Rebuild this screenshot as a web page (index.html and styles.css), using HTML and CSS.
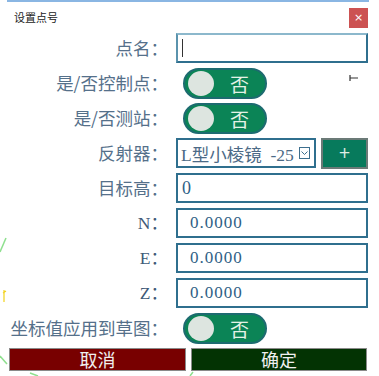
FILE: index.html
```html
<!DOCTYPE html>
<html lang="zh-CN">
<head>
  <meta charset="UTF-8" />
  <meta name="viewport" content="width=device-width, initial-scale=1.0"/>
  <title>设置点号</title>
  <link rel="stylesheet" href="styles.css">
</head>
<body>
  <!-- sketch canvas behind the dialog -->
  <svg class="sketch" width="379" height="376" viewBox="0 0 379 376">
    <path d="M0 252 L6 238" stroke="#8fe08f" stroke-width="1.5" fill="none"/>
    <path d="M4 290 L4 302 M3 293 L6 291" stroke="#f2d21a" stroke-width="1.2" fill="none"/>
    <path d="M0 356 L7 364" stroke="#8fe08f" stroke-width="1.5" fill="none"/>
    <path d="M30 373 L38 376 M190 376 L193 372" stroke="#8fe08f" stroke-width="1.5" fill="none"/>
    <path d="M350 78 L358 78 M350 75 L350 81" stroke="#333" stroke-width="1.2" fill="none"/>
  </svg>

  <div class="dialog">
    <div class="dialog-head">
      <span class="dialog-title">设置点号</span>
      <button class="close-btn">×</button>
    </div>

    <div class="form">
      <label class="lbl">点名：</label>
      <div class="field text-field focused"><span class="caret"></span></div>

      <label class="lbl">是/否控制点：</label>
      <div class="field"><div class="toggle"><span class="knob"></span><span class="toggle-text">否</span></div></div>

      <label class="lbl">是/否测站：</label>
      <div class="field"><div class="toggle"><span class="knob"></span><span class="toggle-text">否</span></div></div>

      <label class="lbl">反射器：</label>
      <div class="field select-row">
        <div class="text-field select">
          <span class="select-value">L型小棱镜&nbsp;&nbsp;-25</span>
          <svg class="chev" width="11" height="12" viewBox="0 0 11 12">
            <rect x="0.5" y="0.5" width="10" height="11" fill="none" stroke="#3d6f8e"/>
            <path d="M2.5 4.5 L5.5 7.5 L8.5 4.5" fill="none" stroke="#3d6f8e" stroke-width="1"/>
          </svg>
        </div>
        <button class="add-btn">+</button>
      </div>

      <label class="lbl">目标高：</label>
      <div class="field text-field"><span class="val">0</span></div>

      <label class="lbl latin">N：</label>
      <div class="field text-field"><span class="val num">0.0000</span></div>

      <label class="lbl latin">E：</label>
      <div class="field text-field"><span class="val num">0.0000</span></div>

      <label class="lbl latin">Z：</label>
      <div class="field text-field"><span class="val num">0.0000</span></div>

      <label class="lbl">坐标值应用到草图：</label>
      <div class="field"><div class="toggle"><span class="knob"></span><span class="toggle-text">否</span></div></div>
    </div>

    <div class="actions">
      <button class="btn cancel">取消</button>
      <button class="btn confirm">确定</button>
    </div>
  </div>
</body>
</html>
```

FILE: styles.css
```css
body {
  margin: 0;
  width: 379px;
  height: 376px;
  background: #fff;
  font-family: "Noto Sans CJK SC", "Noto Sans", sans-serif;
  position: relative;
  overflow: hidden;
}

.sketch {
  position: absolute;
  left: 0;
  top: 0;
}

.dialog {
  position: relative;
  margin-left: 7px;
  width: 362px;
  border-top: 2px solid #8ab6e3;
}

.dialog-head {
  height: 31px;
  display: flex;
  align-items: flex-start;
  justify-content: space-between;
}

.dialog-title {
  margin: 7px 0 0 7px;
  font-size: 11px;
  line-height: 16px;
  color: #222;
}

.close-btn {
  margin: 6px 1px 0 0;
  width: 19px;
  height: 20px;
  padding: 0;
  border: none;
  background: #cc5252;
  color: #fff;
  font-size: 11px;
  line-height: 20px;
  font-family: "DejaVu Sans", sans-serif;
}

.form {
  display: grid;
  grid-template-columns: 163px 192px;
  grid-auto-rows: 30px;
  column-gap: 6px;
  row-gap: 5px;
}

.lbl {
  text-align: right;
  font-size: 17.5px;
  line-height: 30px;
  color: #55708a;
  white-space: nowrap;
  margin-right: 2px;
}

.lbl.latin {
  font-family: "Liberation Serif", "Noto Sans CJK SC", serif;
  color: #3f5a78;
}

.field {
  display: flex;
  align-items: center;
}

.text-field {
  box-sizing: border-box;
  height: 30px;
  border: 2px solid #2f6f8e;
  background: #fff;
  padding-left: 4px;
}

.text-field.focused {
  border-top-color: #8cb8cc;
  border-left-color: #5b93ad;
}

.caret {
  width: 1px;
  height: 18px;
  background: #333;
}

.val {
  font-family: "Liberation Serif", "Noto Sans CJK SC", serif;
  font-size: 18px;
  color: #2f5f86;
}

.val.num {
  margin-left: 8px;
  font-size: 17px;
  letter-spacing: 1px;
}

.toggle {
  box-sizing: border-box;
  margin-left: 7px;
  width: 84px;
  height: 31px;
  border-radius: 16px;
  border: 2px solid #1d6b70;
  background: #0b8456;
  display: flex;
  align-items: center;
  padding-left: 3px;
}

.knob {
  width: 26px;
  height: 25px;
  border-radius: 50%;
  background: #dde5e0;
}

.toggle-text {
  margin-left: 16px;
  font-size: 19px;
  color: #e4f2e6;
  line-height: 1;
}

.select-row {
  gap: 5px;
}

.select {
  width: 140px;
  display: flex;
  align-items: center;
  padding: 0 4px 0 3px;
}

.select-value {
  font-family: "Liberation Serif", "Noto Sans CJK SC", serif;
  font-size: 17.5px;
  color: #4c6a86;
  white-space: nowrap;
  overflow: hidden;
}

.chev {
  flex-shrink: 0;
  margin-left: auto;
}

.add-btn {
  box-sizing: border-box;
  width: 47px;
  height: 31px;
  border: 2px solid #6b7a77;
  background: #077a5c;
  color: #e0eee6;
  font-size: 15px;
  padding: 0;
  font-family: "DejaVu Sans", sans-serif;
}

.actions {
  display: flex;
  gap: 5px;
  margin: 5px 0 0 2px;
}

.btn {
  box-sizing: border-box;
  height: 23px;
  border: 1px solid #8a8a8a;
  padding: 0;
  font-family: "Noto Sans CJK SC", sans-serif;
  font-size: 18px;
  line-height: 21px;
  color: #f0f0f0;
}

.cancel {
  width: 177px;
  background: #780000;
}

.confirm {
  width: 176px;
  background: #033303;
}
```
